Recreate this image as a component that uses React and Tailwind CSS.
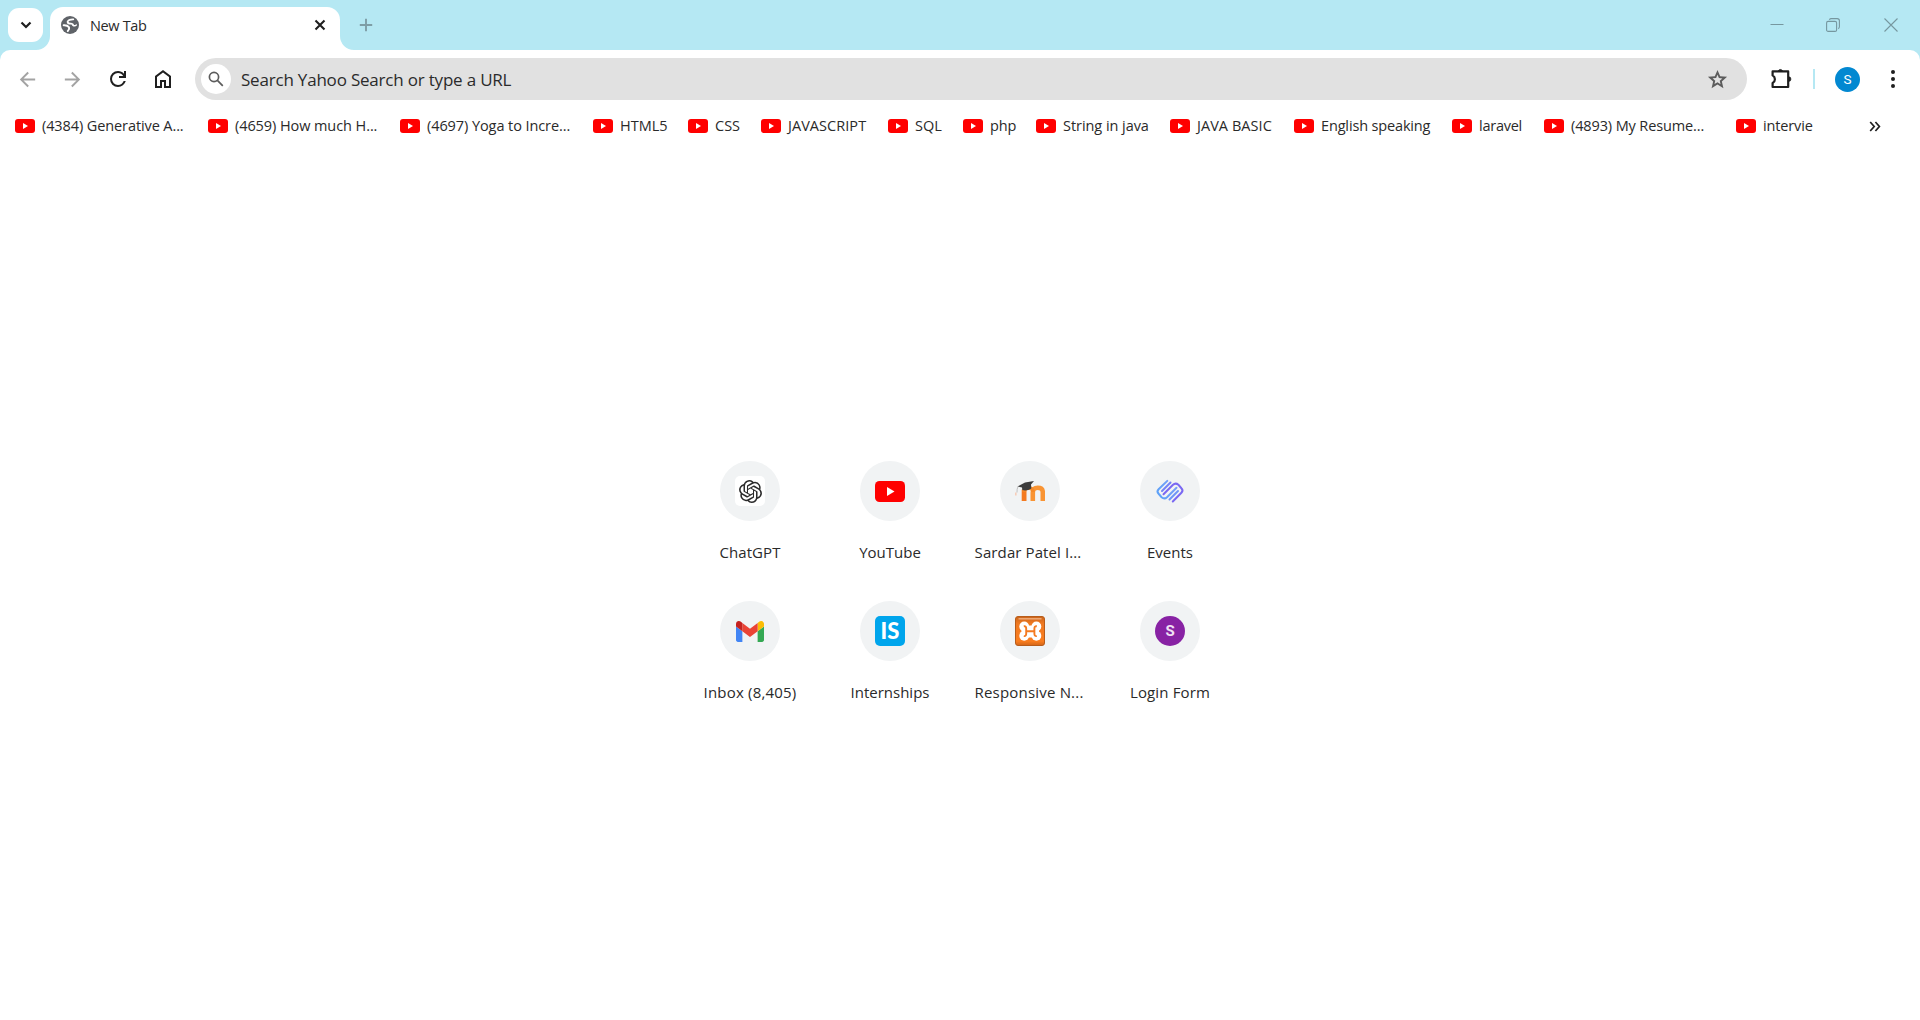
import React from "react";
import { SiOpenai } from "react-icons/si";

const bookmarks = [
  { label: "(4384) Generative A...", box: "w-[193px]", track: "tracking-[-0.1px]" },
  { label: "(4659) How much H...", box: "w-[192px]", track: "tracking-[-0.08px]" },
  { label: "(4697) Yoga to Incre...", box: "w-[193px]", track: "tracking-[-0.08px]" },
  { label: "HTML5", box: "w-[95px]", track: "" },
  { label: "CSS", box: "w-[73px]", track: "" },
  { label: "JAVASCRIPT", box: "w-[127px]", track: "tracking-[0.05px]" },
  { label: "SQL", box: "w-[75px]", track: "" },
  { label: "php", box: "w-[73px]", track: "tracking-[-0.1px]" },
  { label: "String in java", box: "w-[134px]", track: "tracking-[-0.05px]" },
  { label: "JAVA BASIC", box: "w-[124px]", track: "tracking-[0.05px]" },
  { label: "English speaking", box: "w-[158px]", track: "tracking-[-0.15px]" },
  { label: "laravel", box: "w-[92px]", track: "tracking-[-0.25px]" },
  { label: "(4893) My Resume...", box: "w-[192px]", track: "tracking-[-0.12px]" },
  { label: "intervie", box: "w-[90px]", track: "tracking-[-0.15px]" },
];

function YouTubeIcon({ className }) {
  return (
    <svg viewBox="0 0 20 14" className={className}>
      <rect width="20" height="14" rx="3" fill="#ff0000" />
      <path d="M8 4v6l5-3z" fill="#fff" />
    </svg>
  );
}

function Symbol({ d, className }) {
  return (
    <svg viewBox="0 -960 960 960" fill="currentColor" className={className}>
      <path d={d} />
    </svg>
  );
}

function GlobeIcon() {
  return (
    <svg viewBox="0 0 18 18" className="ml-[2px] size-[18px]">
      <circle cx="9" cy="9" r="9" fill="#5f6368" />
      <g fill="none" stroke="#fff" strokeLinecap="round">
        <path d="M12.300 3.300Q7.500 3.200 6.600 5.800q.2 2 3.400 1.800 2 .2 2.200 1.700" strokeWidth="1.800" />
        <path d="M2.700 9.300q3.800-.2 5.300 2 .8 1.900-1.200 3.700" strokeWidth="2" />
        <path d="M12.300 9.300q1.500.9 3-.3" strokeWidth="1.500" />
      </g>
    </svg>
  );
}

function MoodleIcon() {
  return (
    <svg viewBox="0 0 30 30" className="size-[30px]">
      <path d="M.8 16.500v3" stroke="#f7cdb8" strokeWidth="1.600" />
      <path d="M9.100 25V13.500" stroke="#f47a20" strokeWidth="4.800" />
      <path d="M17.800 25v-8.500q0-4.700 5-4.700t5 4.700V25" fill="none" stroke="#f99433" strokeWidth="4.600" />
      <path d="M9.100 16q0-4 4.400-4t4.500 4" fill="none" stroke="#f68a28" strokeWidth="3.600" />
      <path d="M2.500 10.500 10 6.500l9-1.500-3 3.500.3 4q-4 2.800-9 1.600L7 11.500z" fill="#3c3c3c" />
      <path d="M3 10.500Q1.800 13 2 16.500" fill="none" stroke="#aaa" strokeWidth=".7" />
    </svg>
  );
}

function EventsIcon() {
  return (
    <svg viewBox="0 0 30 30" className="size-[30px]" fill="none" strokeWidth="2" strokeLinecap="round">
      <defs>
        <linearGradient id="ev-a" x1="2" y1="20" x2="24" y2="8" gradientUnits="userSpaceOnUse">
          <stop stopColor="#5aa2f8" />
          <stop offset="1" stopColor="#7f9cf8" />
        </linearGradient>
      </defs>
      <path d="M12.300 4.900 3.600 13.200q-2.200 2.300 0 4.600l3 3.400q2.800 2.400 5.400 0L21.500 11.700" stroke="url(#ev-a)" />
      <path d="M17.800 25.500 26.400 16.800q2.200-2.300 0-4.600l-3-3.400q-2.800-2.400-5.400 0L8.500 18.300" stroke="#7a68f2" />
      <path d="M15.500 6.500 7 15" stroke="#7482f6" />
      <path d="M14.500 23.500 23 15" stroke="#6e95f8" />
    </svg>
  );
}

function GmailIcon() {
  return (
    <svg viewBox="52 42 88 66" className="mr-px h-[21px] w-[28px]">
      <path fill="#4285f4" d="M58 108h14V74L52 59v43c0 3.320 2.690 6 6 6" />
      <path fill="#34a853" d="M120 108h14c3.320 0 6-2.690 6-6V59l-20 15" />
      <path fill="#fbbc04" d="M120 48v26l20-15v-8c0-7.420-8.470-11.650-14.400-7.200" />
      <path fill="#ea4335" d="M72 74V48l24 18 24-18v26L96 92" />
      <path fill="#c5221f" d="M52 51v8l20 15V48l-5.600-4.200c-5.940-4.450-14.400-.22-14.400 7.200" />
    </svg>
  );
}

function XamppIcon() {
  return (
    <svg viewBox="0 0 30 30" className="size-[30px]">
      <defs>
        <linearGradient id="xa" x1="0" y1="0" x2="0" y2="1">
          <stop stopColor="#c9651c" />
          <stop offset=".25" stopColor="#f07a22" />
          <stop offset=".85" stopColor="#fa7d1e" />
          <stop offset="1" stopColor="#d2661a" />
        </linearGradient>
      </defs>
      <rect x=".5" y=".5" width="29" height="29" rx="2.500" fill="url(#xa)" stroke="#b85c1a" />
      <path d="M3.500 2.800h23" stroke="#f0ad7c" strokeWidth="1.400" />
      <g fill="#fff">
        <circle cx="9.200" cy="10.500" r="4.900" />
        <circle cx="21.400" cy="10.500" r="4.900" />
        <circle cx="9.200" cy="19.800" r="4.900" />
        <circle cx="21.400" cy="19.800" r="4.900" />
        <path d="M6.500 11h17.500v8.500H6.500zM12 9.500h6.500v12H12z" />
      </g>
      <path d="M8.800 10.300q2.400-.4 2.400 2.400v5q0 2.800-2.400 2.400M21.800 10.300q-2.400-.4-2.400 2.400v5q0 2.800 2.400 2.400M11 15.200h8.600" fill="none" stroke="#f47a20" strokeWidth="1.900" />
    </svg>
  );
}

const tiles = [
  {
    label: "ChatGPT",
    track: "tracking-[0.1px]",
    icon: (
      <span className="grid size-[30px] place-items-center rounded-[5px] bg-white">
        <SiOpenai className="size-[23px] text-[#2b2b2b]" />
      </span>
    ),
  },
  { label: "YouTube", track: "", icon: <YouTubeIcon className="h-[21px] w-[30px]" /> },
  { label: "Sardar Patel I...", track: "tracking-[0.1px]", shift: "-translate-x-[2px]", icon: <MoodleIcon /> },
  { label: "Events", track: "", icon: <EventsIcon /> },
  { label: "Inbox (8,405)", track: "tracking-[0.2px]", icon: <GmailIcon /> },
  {
    label: "Internships",
    track: "",
    icon: (
      <span className="grid size-[30px] place-items-center rounded-[5px] bg-[#00a5ec] font-['Lato'] text-[22px] leading-[30px] font-black text-white">
        IS
      </span>
    ),
  },
  { label: "Responsive N...", track: "tracking-[0.2px]", shift: "-translate-x-[1px]", icon: <XamppIcon /> },
  {
    label: "Login Form",
    track: "tracking-[0.15px]",
    icon: (
      <span className="grid size-[30px] place-items-center rounded-full bg-[#8822a4] font-['Roboto'] text-[15px] leading-[30px] font-bold text-[#f0e0f4]">
        S
      </span>
    ),
  },
];

function TabStrip() {
  return (
    <div className="flex h-[50px] items-end bg-[#b5e8f3]">
      <button className="mb-2 ml-2 grid h-[34px] w-[35px] place-items-center rounded-[11px] bg-white">
        <svg viewBox="0 0 12 8" className="h-2 w-3" fill="none" stroke="#1f1f1f" strokeWidth="2.200">
          <path d="M1.500 1.500 6 6l4.500-4.500" />
        </svg>
      </button>
      <svg viewBox="0 0 14 14" className="-ml-[7px] size-[14px] fill-white">
        <path d="M14 0v14H0A14 14 0 0 0 14 0" />
      </svg>
      <div className="flex h-[43px] w-[290px] items-center rounded-t-[13px] bg-white pr-[13px] pb-[7px] pl-[9px]">
        <GlobeIcon />
        <span className="mt-[2px] ml-[11px] flex-1 text-[14.500px] leading-5 tracking-[-0.350px]">New Tab</span>
        <svg viewBox="0 0 14 14" className="size-[14px]" fill="none" stroke="#1f1f1f" strokeWidth="2.100">
          <path d="m2.500 2.500 9 9m0-9-9 9" />
        </svg>
      </div>
      <svg viewBox="0 0 14 14" className="size-[14px] fill-white">
        <path d="M0 0v14h14A14 14 0 0 1 0 0" />
      </svg>
      <svg viewBox="0 0 14 14" className="mb-[18px] ml-[5px] size-[14px]" stroke="#7e9ea6" strokeWidth="1.900">
        <path d="M7 .8v12.400M.8 7h12.400" />
      </svg>
      <div className="mr-[22px] mb-[18px] ml-auto flex items-center gap-[42px] text-[#76979f]">
        <svg viewBox="0 0 14 14" className="size-[14px]" stroke="currentColor" strokeWidth="1">
          <path d="M.5 6.500h13" />
        </svg>
        <svg viewBox="0 0 14 14" className="size-[14px]" fill="none" stroke="currentColor" strokeWidth="1.100">
          <rect x=".6" y="3.400" width="10" height="10" rx="1.500" />
          <path d="M3.300 1.700Q4 .6 5.200.6h6q2.200 0 2.200 2.200v6q0 1.200-1.100 1.900" />
        </svg>
        <svg viewBox="0 0 14 14" className="ml-[2px] size-[14px]" stroke="currentColor" strokeWidth="1.100">
          <path d="m.5.5 13 13m0-13-13 13" />
        </svg>
      </div>
    </div>
  );
}

function Toolbar() {
  return (
    <div className="flex h-[58px] items-center rounded-t-[10px] bg-white pl-4">
      <Symbol className="size-[23px] text-[#a3a3a3]" d="m313-440 224 224-57 56-320-320 320-320 57 56-224 224h487v80H313Z" />
      <Symbol className="ml-[22px] size-[23px] text-[#a3a3a3]" d="M647-440H160v-80h487L423-744l57-56 320 320-320 320-57-56 224-224Z" />
      <Symbol
        className="ml-[22px] size-6 text-[#1f1f1f]"
        d="M480-160q-134 0-227-93t-93-227q0-134 93-227t227-93q69 0 132 28.500T720-690v-110h80v280H520v-80h168q-32-56-87.500-88T480-720q-100 0-170 70t-70 170q0 100 70 170t170 70q77 0 139-44t87-116h84q-28 106-114 173t-196 67Z"
      />
      <Symbol
        className="ml-[21px] size-6 text-[#1f1f1f]"
        d="M240-200h120v-240h240v240h120v-360L480-740 240-560v360Zm-80 80v-480l320-240 320 240v480H520v-240h-80v240H160Z"
      />
      <div className="ml-5 flex h-[42px] w-[1552px] items-center rounded-full bg-[#e1e1e1] pr-[18px] pl-[6px]">
        <span className="grid size-[30px] place-items-center rounded-full bg-white">
          <svg viewBox="0 0 16 16" className="size-4" fill="none" stroke="#5c5c5c" strokeWidth="1.700">
            <circle cx="6" cy="6" r="4.600" />
            <path d="m9.400 9.400 5.400 5.400" />
          </svg>
        </span>
        <span className="mt-px ml-[10px] flex-1 text-[17px] leading-6 tracking-[-0.2px] text-[#2b2b2b]">
          Search Yahoo Search or type a URL
        </span>
        <Symbol
          className="size-[23px] text-[#5c5c5c]"
          d="m354-287 126-76 126 77-33-144 111-96-146-13-58-136-58 135-146 13 111 97-33 143ZM233-120l65-281L80-590l288-25 112-265 112 265 288 25-218 189 65 281-247-149-247 149Zm247-350Z"
        />
      </div>
      <svg viewBox="0 0 22 22" className="mb-[2px] ml-[23px] size-[22px]" fill="none" stroke="#1f1f1f" strokeWidth="2.200" strokeLinejoin="round">
        <path d="M2.600 4.400h15.600v15.600H2.600v-4q2.300-1.300 2.300-3.800T2.600 8.400z" />
        <path d="M8.300 4a2.200 2.200 0 0 1 4.200 0zM18.600 9.800a2.200 2.200 0 0 1 0 4.600z" fill="#1f1f1f" strokeWidth=".8" />
      </svg>
      <span className="ml-[21px] h-5 w-[2px] bg-[#b5e8f3]" />
      <span className="ml-5 grid size-[25px] place-items-center rounded-full bg-[#0288d1] font-['Roboto'] text-[13.500px] leading-[25px] font-normal text-white">
        S
      </span>
      <svg viewBox="0 0 6 20" className="ml-[30px] h-5 w-[6px]" fill="#1f1f1f">
        <circle cx="3" cy="3" r="2" />
        <circle cx="3" cy="10" r="2" />
        <circle cx="3" cy="17" r="2" />
      </svg>
    </div>
  );
}

function BookmarkBar() {
  return (
    <div className="flex h-9 items-center bg-white pl-[15px]">
      {bookmarks.map((b) => (
        <div key={b.label} className={`flex shrink-0 items-center ${b.box}`}>
          <YouTubeIcon className="h-[14px] w-5 shrink-0" />
          <span className={`ml-[7px] text-[14.500px] leading-5 whitespace-nowrap ${b.track}`}>{b.label}</span>
        </div>
      ))}
      <svg viewBox="0 0 12 11" className="mr-[39px] ml-auto h-[11px] w-3" fill="none" stroke="#1f1f1f" strokeWidth="1.700">
        <path d="m1.200 1 4 4.500-4 4.500M6.400 1l4 4.500-4 4.500" />
      </svg>
    </div>
  );
}

export default function App() {
  return (
    <div className="flex h-[1020px] w-[1920px] flex-col overflow-hidden bg-white font-['Open_Sans',sans-serif] text-[#2a2a2a]">
      <TabStrip />
      <div className="bg-[#b5e8f3]">
        <Toolbar />
      </div>
      <BookmarkBar />
      <main className="mx-auto mt-[317px] grid grid-cols-4">
        {tiles.map((t) => (
          <div key={t.label} className="flex h-[140px] w-[140px] flex-col items-center">
            <span className="grid size-[60px] place-items-center rounded-full bg-[#f1f3f4]">{t.icon}</span>
            <span className={`mt-[21px] text-[15px] leading-5 whitespace-nowrap ${t.track} ${t.shift || ""}`}>{t.label}</span>
          </div>
        ))}
      </main>
    </div>
  );
}
